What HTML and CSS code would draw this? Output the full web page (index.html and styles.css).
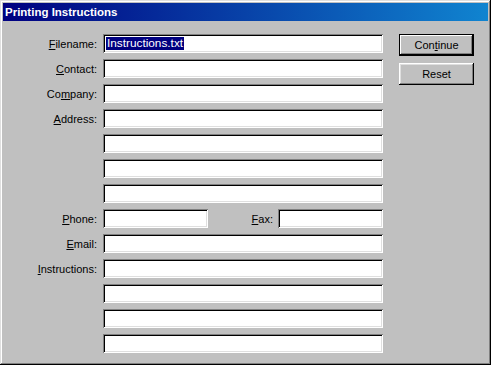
FILE: index.html
```html
<!DOCTYPE html>
<html>
<head>
<meta charset="utf-8">
<link rel="stylesheet" href="styles.css">
</head>
<body>
<div class="window">
  <div class="titlebar">Printing Instructions</div>
  <div class="content">
    <div class="form">
      <label class="lbl"><u>F</u>ilename:</label>
      <div class="field"><span class="sel">Instructions.txt</span></div>
      <label class="lbl"><u>C</u>ontact:</label>
      <div class="field"></div>
      <label class="lbl">Co<u>m</u>pany:</label>
      <div class="field"></div>
      <label class="lbl"><u>A</u>ddress:</label>
      <div class="field"></div>
      <span></span>
      <div class="field"></div>
      <span></span>
      <div class="field"></div>
      <span></span>
      <div class="field"></div>
      <label class="lbl"><u>P</u>hone:</label>
      <div class="split">
        <div class="field short"></div>
        <label class="lbl grow"><u>F</u>ax:</label>
        <div class="field short"></div>
      </div>
      <label class="lbl"><u>E</u>mail:</label>
      <div class="field"></div>
      <label class="lbl"><u>I</u>nstructions:</label>
      <div class="field"></div>
      <span></span>
      <div class="field"></div>
      <span></span>
      <div class="field"></div>
      <span></span>
      <div class="field"></div>
    </div>
    <div class="buttons">
      <button class="btn default">Con<u>t</u>inue</button>
      <button class="btn">Reset</button>
    </div>
  </div>
</div>
</body>
</html>
```

FILE: styles.css
```css
* { box-sizing: border-box; }
html, body { margin: 0; padding: 0; background: #c0c0c0; }
body { font-family: "Liberation Sans", Arial, sans-serif; font-size: 11px; color: #000; }

.window {
  width: 491px;
  height: 365px;
  padding: 3px;
  background: #c0c0c0;
  box-shadow: inset -1px -1px #000, inset 1px 1px #dfdfdf, inset -2px -2px #808080, inset 2px 2px #fff;
}

.titlebar {
  height: 18px;
  line-height: 18px;
  padding-left: 2px;
  color: #fff;
  font-weight: bold;
  font-size: 11.5px;
  background: linear-gradient(90deg, #000080, #1084d0);
}

.content {
  display: flex;
  align-items: flex-start;
  padding-top: 13px;
  gap: 16px;
}

.form {
  display: grid;
  grid-template-columns: 94px 280px;
  grid-auto-rows: 19px;
  column-gap: 6px;
  row-gap: 6px;
}

.lbl {
  display: flex;
  align-items: center;
  justify-content: flex-end;
  white-space: nowrap;
}

.field {
  height: 19px;
  background: #fff;
  box-shadow: inset 1px 1px #808080, inset -1px -1px #fff, inset 2px 2px #000, inset -2px -2px #dfdfdf;
  padding: 3px 0 0 3px;
  line-height: 13px;
}

.sel {
  display: inline-block;
  background: #000080;
  color: #fff;
  padding: 0 1px;
  font-size: 11.8px;
  line-height: 13px;
}

.split {
  display: flex;
  align-items: center;
  gap: 5px;
}
.short { width: 105px; flex: none; }
.grow { flex: 1; height: 19px; }

.buttons {
  display: flex;
  flex-direction: column;
  gap: 7px;
  width: 75px;
}

.btn {
  appearance: none;
  font-family: "Liberation Sans", Arial, sans-serif;
  font-size: 11px;
  color: #000;
  height: 22px;
  width: 75px;
  padding: 0;
  border: none;
  background: #c0c0c0;
  box-shadow: inset -1px -1px #000, inset 1px 1px #fff, inset -2px -2px #808080, inset 2px 2px #dfdfdf;
}

.btn.default {
  border: 1px solid #000;
  box-shadow: inset -1px -1px #000, inset 1px 1px #fff, inset -2px -2px #808080;
}
```
